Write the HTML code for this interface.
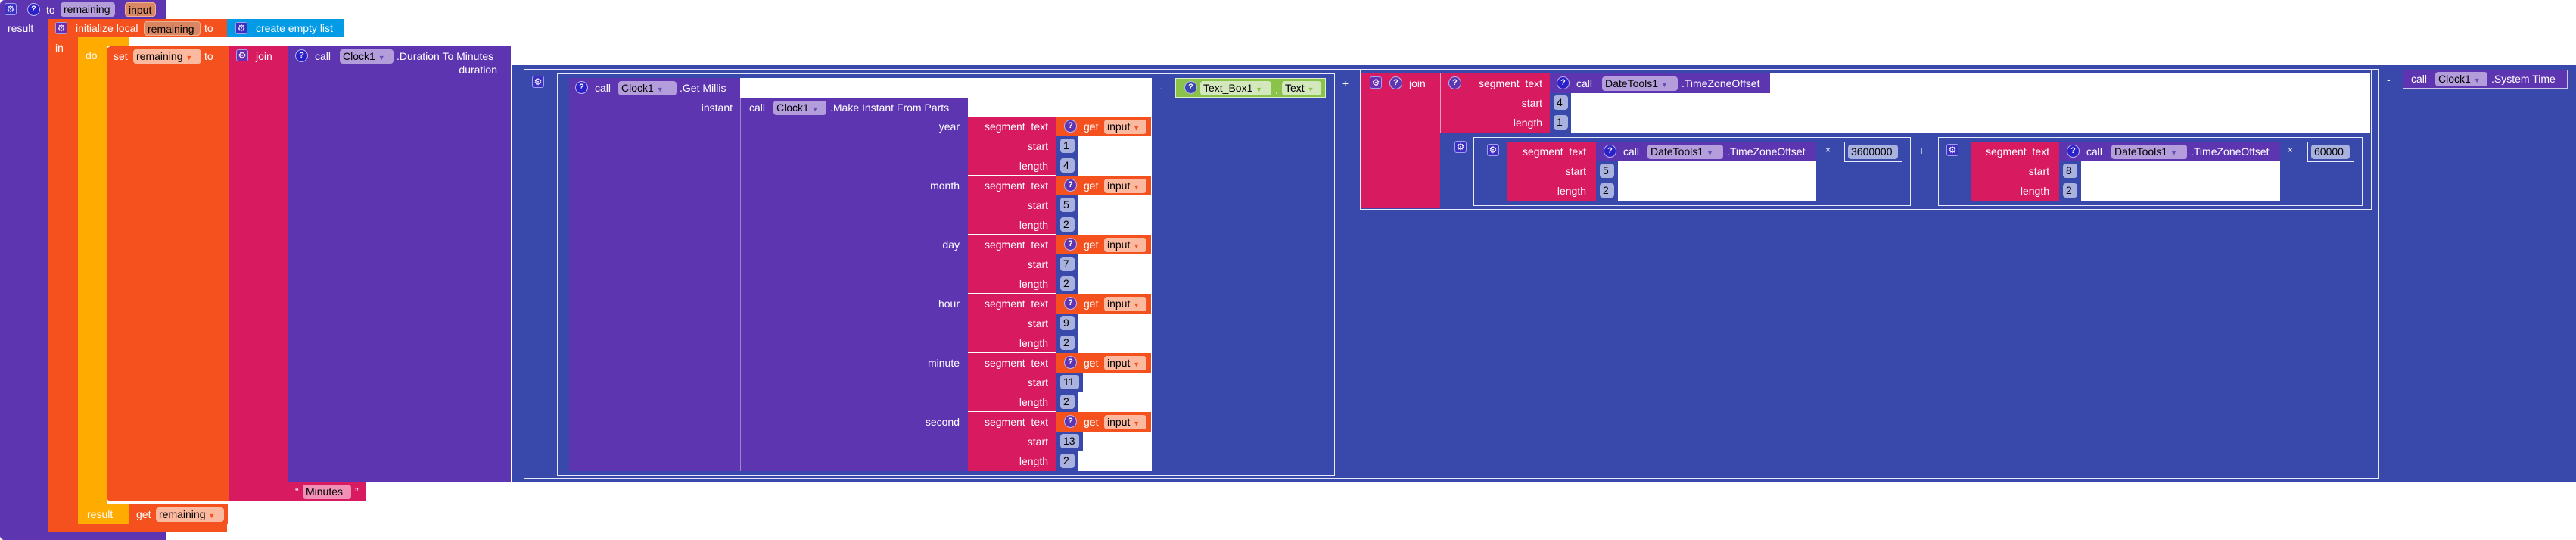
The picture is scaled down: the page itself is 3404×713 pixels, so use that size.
<!DOCTYPE html>
<html><head><meta charset="utf-8"><style>
body{margin:0;width:3404px;height:713px;background:#fff;position:relative;overflow:hidden;font-family:"Liberation Sans",sans-serif}
.a{position:absolute}
.t{position:absolute;color:#fff;font-size:14px;line-height:26px;height:26px;white-space:nowrap}
.r{text-align:right;width:120px}
.p{position:absolute;height:19px;line-height:19px;border-radius:4px;color:#000;font-size:14px;padding:0 4px;white-space:nowrap;box-sizing:border-box}
.g{position:absolute;width:16px;height:16px;border-radius:3px;background:#3d2fc2;border:1px solid #9fa0f0;box-sizing:border-box;color:#fff;font-size:12px;line-height:14px;text-align:center}
.q{position:absolute;width:17px;height:17px;border-radius:50%;background:#2c20c8;border:1px solid #b9b4f0;box-sizing:border-box;color:#fff;font-size:11px;font-weight:bold;line-height:15px;text-align:center}
.o{position:absolute;border:1.5px solid #e8eaf6;box-sizing:border-box}
.pu{background:#5e35b1}.or{background:#f4511e}.ye{background:#ffab00}.mg{background:#d81b60}.bl{background:#3949ab}.cy{background:#039be5}.gr{background:#8bc34a}.wh{background:#fff}
.pl{background:#b39ddb}.pn{background:#a9b1de}.po{background:#fbb9a0}
</style></head><body>
<!-- procedure -->
<div class="a pu" style="left:0;top:0;width:219px;height:25px;border-radius:6px 0 0 0"></div>
<div class="a pu" style="left:0;top:25px;width:63px;height:688px;border-radius:0 0 0 6px"></div>
<div class="a pu" style="left:0;top:702px;width:219px;height:11px;border-radius:0 0 0 6px"></div>
<div class="g" style="left:6px;top:4px">⚙</div><div class="q" style="left:36px;top:4px">?</div>
<div class="t" style="left:61px;top:0">to</div>
<div class="p pl" style="left:80px;top:3px;width:72px">remaining</div>
<div class="p" style="left:165px;top:3px;width:41px;background:#d98762;border:1px solid #f0b090">input</div>
<div class="t" style="left:10px;top:24px">result</div>
<!-- init local -->
<div class="a or" style="left:63px;top:25px;width:237px;height:24px"></div>
<div class="a or" style="left:63px;top:49px;width:40px;height:653px"></div>
<div class="a or" style="left:63px;top:692px;width:237px;height:10px"></div>
<div class="g" style="left:73px;top:29px;background:#6a2fb0">⚙</div>
<div class="t" style="left:100px;top:24px">initialize local</div>
<div class="p" style="left:190px;top:28px;width:75px;background:#d98762;border:1px solid #f0b090">remaining</div>
<div class="t" style="left:270px;top:24px">to</div>
<div class="a cy" style="left:300px;top:25px;width:155px;height:24px"></div>
<div class="g" style="left:311px;top:29px">⚙</div>
<div class="t" style="left:338px;top:24px">create empty list</div>
<div class="t" style="left:73px;top:50px">in</div>
<!-- do/result -->
<div class="a ye" style="left:103px;top:49px;width:67px;height:12px"></div>
<div class="a ye" style="left:103px;top:61px;width:38px;height:604px"></div>
<div class="a ye" style="left:103px;top:665px;width:67px;height:27px"></div>
<div class="t" style="left:113px;top:60px">do</div>
<div class="t" style="left:115px;top:666px">result</div>
<div class="a or" style="left:170px;top:666px;width:131px;height:26px"></div>
<div class="t" style="left:180px;top:666px">get</div>
<div class="p po" style="left:206px;top:670px;width:90px">remaining <span style="color:#f4511e;font-size:9px">▼</span></div>
<!-- set -->
<div class="a or" style="left:141px;top:61px;width:162px;height:601px;border-radius:6px 0 0 6px"></div>
<div class="t" style="left:150px;top:61px">set</div>
<div class="p po" style="left:176px;top:65px;width:90px">remaining <span style="color:#f4511e;font-size:9px">▼</span></div>
<div class="t" style="left:270px;top:61px">to</div>
<div class="a mg" style="left:303px;top:61px;width:77px;height:601px"></div>
<div class="g" style="left:312px;top:65px;background:#6a2fb0">⚙</div>
<div class="t" style="left:338px;top:61px">join</div>
<div class="a mg" style="left:380px;top:637px;width:104px;height:25px"></div>
<div class="t" style="left:390px;top:636px">“</div>
<div class="p" style="left:400px;top:640px;width:64px;background:#f190b5">Minutes</div>
<div class="t" style="left:469px;top:636px">”</div>
<div class="a pu" style="left:380px;top:61px;width:295px;height:575px"></div>
<div class="q" style="left:390px;top:65px">?</div>
<div class="t" style="left:416px;top:61px">call</div>
<div class="p pl" style="left:449px;top:65px;width:71px">Clock1 <span style="color:#6a4fb0;font-size:9px">▼</span></div>
<div class="t" style="left:524px;top:61px">.Duration To Minutes</div>
<div class="t r" style="left:537px;top:79px">duration</div>
<!-- blue -->
<div class="a bl" style="left:676px;top:86px;width:2728px;height:550px"></div>
<div class="o" style="left:692px;top:91px;width:2452px;height:541px"></div>
<div class="g" style="left:703px;top:100px">⚙</div>
<div class="o" style="left:736px;top:97px;width:1028px;height:531px"></div>
<div class="a wh" style="left:752px;top:103px;width:770px;height:519px"></div>
<div class="a pu" style="left:752px;top:103px;width:226px;height:519px"></div>
<div class="q" style="left:760px;top:107px">?</div>
<div class="t" style="left:786px;top:103px">call</div>
<div class="p pl" style="left:817px;top:107px;width:77px">Clock1 <span style="color:#6a4fb0;font-size:9px">▼</span></div>
<div class="t" style="left:898px;top:103px">.Get Millis</div>
<div class="t r" style="left:848px;top:129px">instant</div>
<div class="a pu" style="left:978px;top:129px;width:301px;height:493px;border-left:1px solid #9a86d0;box-sizing:border-box"></div>
<div class="t" style="left:990px;top:129px">call</div>
<div class="p pl" style="left:1022px;top:133px;width:70px">Clock1 <span style="color:#6a4fb0;font-size:9px">▼</span></div>
<div class="t" style="left:1097px;top:129px">.Make Instant From Parts</div>
<div class="a mg" style="left:1279px;top:154px;width:117px;height:468px"></div>
<div class="t r" style="left:1148px;top:154px">year</div>
<div class="t r" style="left:1148px;top:232px">month</div>
<div class="t r" style="left:1148px;top:310px">day</div>
<div class="t r" style="left:1148px;top:388px">hour</div>
<div class="t r" style="left:1148px;top:466px">minute</div>
<div class="t r" style="left:1148px;top:544px">second</div>
<!-- segments rows -->
<div id="segs"></div>
<!-- generated rows -->
<div class="a" style="left:1279px;top:231px;width:117px;height:1px;background:#fff"></div>
<div class="a" style="left:1279px;top:309px;width:117px;height:1px;background:#fff"></div>
<div class="a" style="left:1279px;top:387px;width:117px;height:1px;background:#fff"></div>
<div class="a" style="left:1279px;top:465px;width:117px;height:1px;background:#fff"></div>
<div class="a" style="left:1279px;top:543px;width:117px;height:1px;background:#fff"></div>

<div class="t r" style="left:1265px;top:154px">segment&nbsp; text</div><div class="t r" style="left:1265px;top:180px">start</div><div class="t r" style="left:1265px;top:206px">length</div>
<div class="t r" style="left:1265px;top:232px">segment&nbsp; text</div><div class="t r" style="left:1265px;top:258px">start</div><div class="t r" style="left:1265px;top:284px">length</div>
<div class="t r" style="left:1265px;top:310px">segment&nbsp; text</div><div class="t r" style="left:1265px;top:336px">start</div><div class="t r" style="left:1265px;top:362px">length</div>
<div class="t r" style="left:1265px;top:388px">segment&nbsp; text</div><div class="t r" style="left:1265px;top:414px">start</div><div class="t r" style="left:1265px;top:440px">length</div>
<div class="t r" style="left:1265px;top:466px">segment&nbsp; text</div><div class="t r" style="left:1265px;top:492px">start</div><div class="t r" style="left:1265px;top:518px">length</div>
<div class="t r" style="left:1265px;top:544px">segment&nbsp; text</div><div class="t r" style="left:1265px;top:570px">start</div><div class="t r" style="left:1265px;top:596px">length</div>

<!-- get input blocks -->
<div class="a or" style="left:1396px;top:154px;width:125px;height:26px"></div><div class="q" style="left:1406px;top:158px;background:#5e35b1">?</div><div class="t" style="left:1432px;top:154px">get</div><div class="p po" style="left:1459px;top:158px;width:56px">input <span style="color:#f4511e;font-size:9px">▼</span></div>
<div class="a or" style="left:1396px;top:232px;width:125px;height:26px"></div><div class="q" style="left:1406px;top:236px;background:#5e35b1">?</div><div class="t" style="left:1432px;top:232px">get</div><div class="p po" style="left:1459px;top:236px;width:56px">input <span style="color:#f4511e;font-size:9px">▼</span></div>
<div class="a or" style="left:1396px;top:310px;width:125px;height:26px"></div><div class="q" style="left:1406px;top:314px;background:#5e35b1">?</div><div class="t" style="left:1432px;top:310px">get</div><div class="p po" style="left:1459px;top:314px;width:56px">input <span style="color:#f4511e;font-size:9px">▼</span></div>
<div class="a or" style="left:1396px;top:388px;width:125px;height:26px"></div><div class="q" style="left:1406px;top:392px;background:#5e35b1">?</div><div class="t" style="left:1432px;top:388px">get</div><div class="p po" style="left:1459px;top:392px;width:56px">input <span style="color:#f4511e;font-size:9px">▼</span></div>
<div class="a or" style="left:1396px;top:466px;width:125px;height:26px"></div><div class="q" style="left:1406px;top:470px;background:#5e35b1">?</div><div class="t" style="left:1432px;top:466px">get</div><div class="p po" style="left:1459px;top:470px;width:56px">input <span style="color:#f4511e;font-size:9px">▼</span></div>
<div class="a or" style="left:1396px;top:544px;width:125px;height:26px"></div><div class="q" style="left:1406px;top:548px;background:#5e35b1">?</div><div class="t" style="left:1432px;top:544px">get</div><div class="p po" style="left:1459px;top:548px;width:56px">input <span style="color:#f4511e;font-size:9px">▼</span></div>

<!-- numbers -->
<div class="a bl" style="left:1396px;top:180px;width:29px;height:26px"></div><div class="p pn" style="left:1401px;top:183px;width:19px">1</div>
<div class="a bl" style="left:1396px;top:206px;width:29px;height:26px"></div><div class="p pn" style="left:1401px;top:209px;width:19px">4</div>
<div class="a bl" style="left:1396px;top:258px;width:29px;height:26px"></div><div class="p pn" style="left:1401px;top:261px;width:19px">5</div>
<div class="a bl" style="left:1396px;top:284px;width:29px;height:26px"></div><div class="p pn" style="left:1401px;top:287px;width:19px">2</div>
<div class="a bl" style="left:1396px;top:336px;width:29px;height:26px"></div><div class="p pn" style="left:1401px;top:339px;width:19px">7</div>
<div class="a bl" style="left:1396px;top:362px;width:29px;height:26px"></div><div class="p pn" style="left:1401px;top:365px;width:19px">2</div>
<div class="a bl" style="left:1396px;top:414px;width:29px;height:26px"></div><div class="p pn" style="left:1401px;top:417px;width:19px">9</div>
<div class="a bl" style="left:1396px;top:440px;width:29px;height:26px"></div><div class="p pn" style="left:1401px;top:443px;width:19px">2</div>
<div class="a bl" style="left:1396px;top:492px;width:35px;height:26px"></div><div class="p pn" style="left:1401px;top:495px;width:25px">11</div>
<div class="a bl" style="left:1396px;top:518px;width:29px;height:26px"></div><div class="p pn" style="left:1401px;top:521px;width:19px">2</div>
<div class="a bl" style="left:1396px;top:570px;width:35px;height:26px"></div><div class="p pn" style="left:1401px;top:573px;width:25px">13</div>
<div class="a bl" style="left:1396px;top:596px;width:29px;height:26px"></div><div class="p pn" style="left:1401px;top:599px;width:19px">2</div>

<!-- green -->
<div class="t" style="left:1532px;top:103px">-</div>
<div class="a gr" style="left:1553px;top:103px;width:199px;height:26px;border:1px solid #dcedc8;box-sizing:border-box"></div>
<div class="q" style="left:1565px;top:107px;background:#3949ab">?</div>
<div class="p" style="left:1586px;top:107px;width:94px;background:#d4e8be">Text_Box1 <span style="color:#8bc34a;font-size:9px">▼</span></div>
<div class="t" style="left:1685px;top:106px;color:#fff">.</div>
<div class="p" style="left:1694px;top:107px;width:52px;background:#d4e8be">Text <span style="color:#8bc34a;font-size:9px">▼</span></div>
<div class="t" style="left:1774px;top:97px">+</div>

<!-- join timezone -->
<div class="o" style="left:1797px;top:92px;width:1337px;height:185px"></div>
<div class="a wh" style="left:2048px;top:97px;width:1084px;height:79px"></div>
<div class="a mg" style="left:1799px;top:97px;width:104px;height:178px"></div>
<div class="g" style="left:1810px;top:101px;background:#6a2fb0">⚙</div><div class="q" style="left:1836px;top:101px;background:#5e35b1">?</div>
<div class="t" style="left:1862px;top:97px">join</div>
<div class="a mg" style="left:1903px;top:97px;width:145px;height:78px;border-left:1px solid #f3a0c0;box-sizing:border-box"></div>
<div class="q" style="left:1914px;top:101px;background:#5e35b1">?</div>
<div class="t r" style="left:1918px;top:97px">segment&nbsp; text</div><div class="t r" style="left:1918px;top:123px">start</div><div class="t r" style="left:1918px;top:149px">length</div>
<div class="a pu" style="left:2048px;top:97px;width:291px;height:26px"></div>
<div class="q" style="left:2057px;top:101px">?</div><div class="t" style="left:2083px;top:97px">call</div>
<div class="p pl" style="left:2117px;top:101px;width:100px">DateTools1 <span style="color:#6a4fb0;font-size:9px">▼</span></div>
<div class="t" style="left:2222px;top:97px">.TimeZoneOffset</div>
<div class="a bl" style="left:2048px;top:123px;width:28px;height:26px"></div><div class="p pn" style="left:2053px;top:126px;width:19px">4</div>
<div class="a bl" style="left:2048px;top:149px;width:28px;height:26px"></div><div class="p pn" style="left:2053px;top:152px;width:19px">1</div>
<div class="g" style="left:1922px;top:186px">⚙</div>

<!-- box A -->
<div class="o" style="left:1947px;top:181px;width:578px;height:91px"></div>
<div class="g" style="left:1965px;top:190px">⚙</div>
<div class="a mg" style="left:1992px;top:187px;width:117px;height:78px"></div>
<div class="t r" style="left:1976px;top:187px">segment&nbsp; text</div><div class="t r" style="left:1976px;top:213px">start</div><div class="t r" style="left:1976px;top:239px">length</div>
<div class="a wh" style="left:2109px;top:187px;width:291px;height:78px"></div>
<div class="a pu" style="left:2109px;top:187px;width:291px;height:26px"></div>
<div class="q" style="left:2119px;top:191px">?</div><div class="t" style="left:2145px;top:187px">call</div>
<div class="p pl" style="left:2177px;top:191px;width:100px">DateTools1 <span style="color:#6a4fb0;font-size:9px">▼</span></div>
<div class="t" style="left:2282px;top:187px">.TimeZoneOffset</div>
<div class="a bl" style="left:2109px;top:213px;width:29px;height:26px"></div><div class="p pn" style="left:2114px;top:216px;width:19px">5</div>
<div class="a bl" style="left:2109px;top:239px;width:29px;height:26px"></div><div class="p pn" style="left:2114px;top:242px;width:19px">2</div>
<div class="t" style="left:2412px;top:185px;font-size:12px">×</div>
<div class="o" style="left:2437px;top:187px;width:77px;height:27px"></div>
<div class="p pn" style="left:2442px;top:191px;width:66px">3600000</div>
<div class="t" style="left:2535px;top:186px">+</div>

<!-- box B -->
<div class="o" style="left:2561px;top:181px;width:561px;height:91px"></div>
<div class="g" style="left:2572px;top:190px">⚙</div>
<div class="a mg" style="left:2604px;top:187px;width:117px;height:78px"></div>
<div class="t r" style="left:2588px;top:187px">segment&nbsp; text</div><div class="t r" style="left:2588px;top:213px">start</div><div class="t r" style="left:2588px;top:239px">length</div>
<div class="a wh" style="left:2721px;top:187px;width:292px;height:78px"></div>
<div class="a pu" style="left:2721px;top:187px;width:292px;height:26px"></div>
<div class="q" style="left:2731px;top:191px">?</div><div class="t" style="left:2757px;top:187px">call</div>
<div class="p pl" style="left:2790px;top:191px;width:100px">DateTools1 <span style="color:#6a4fb0;font-size:9px">▼</span></div>
<div class="t" style="left:2895px;top:187px">.TimeZoneOffset</div>
<div class="a bl" style="left:2721px;top:213px;width:29px;height:26px"></div><div class="p pn" style="left:2726px;top:216px;width:19px">8</div>
<div class="a bl" style="left:2721px;top:239px;width:29px;height:26px"></div><div class="p pn" style="left:2726px;top:242px;width:19px">2</div>
<div class="t" style="left:3023px;top:185px;font-size:12px">×</div>
<div class="o" style="left:3049px;top:187px;width:62px;height:27px"></div>
<div class="p pn" style="left:3054px;top:191px;width:51px">60000</div>

<!-- system time -->
<div class="t" style="left:3154px;top:92px">-</div>
<div class="a pu" style="left:3175px;top:92px;width:218px;height:25px;border:1px solid #d1c4e9;box-sizing:border-box"></div>
<div class="t" style="left:3186px;top:91px">call</div>
<div class="p pl" style="left:3218px;top:95px;width:69px">Clock1 <span style="color:#6a4fb0;font-size:9px">▼</span></div>
<div class="t" style="left:3292px;top:91px">.System Time</div>
</body></html>
